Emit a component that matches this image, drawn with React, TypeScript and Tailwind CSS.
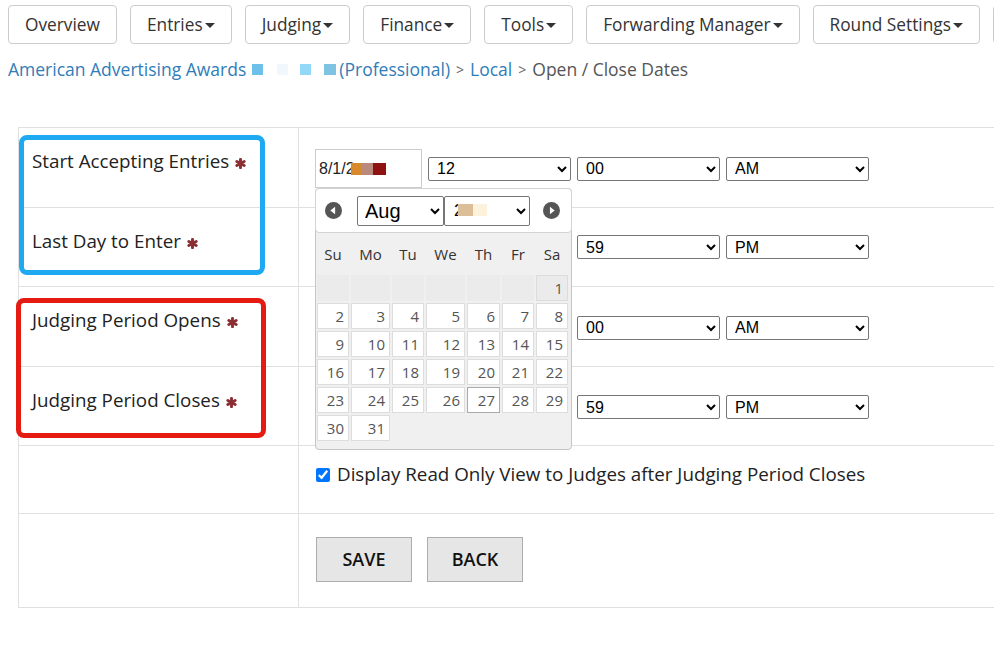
import React from "react";

const font = { fontFamily: '"Open Sans", "Liberation Sans", sans-serif' };

const navItems: { label: string; caret: boolean }[] = [
  { label: "Overview", caret: false },
  { label: "Entries", caret: true },
  { label: "Judging", caret: true },
  { label: "Finance", caret: true },
  { label: "Tools", caret: true },
  { label: "Forwarding Manager", caret: true },
  { label: "Round Settings", caret: true },
  { label: "Admin", caret: true },
];

function Caret() {
  return (
    <svg width="10" height="5" viewBox="0 0 10 5" className="ml-[2px] mt-[2px]">
      <path d="M0 0h10L5 5z" fill="#333" />
    </svg>
  );
}

function Star() {
  return (
    <svg width="11" height="11" viewBox="0 0 12 12" className="ml-[6px] inline-block align-[-1px]">
      <g stroke="#8a2f33" strokeWidth="3.2" strokeLinecap="round">
        <path d="M6 1.5v9" />
        <path d="M2 3.8l8 4.4" />
        <path d="M10 3.8l-8 4.4" />
      </g>
    </svg>
  );
}

function TimeSelect({ value, options }: { value: string; options: string[] }) {
  return (
    <select
      defaultValue={value}
      className="h-[24px] w-[143px] rounded-[2px] border border-[#767676] bg-white pl-[4px] text-[16px] text-black"
      style={{ fontFamily: '"Liberation Sans", Arial, sans-serif' }}
    >
      {options.map((o) => (
        <option key={o}>{o}</option>
      ))}
    </select>
  );
}

function DateRow({ hour, minute, ampm }: { hour: string; minute: string; ampm: string }) {
  return (
    <div className="flex items-center gap-[6px]">
      <div
        className="flex h-[39px] w-[107px] items-center border border-[#ccc] bg-white pl-[3px] text-[16px] text-[#222]"
        style={{ fontFamily: '"Liberation Sans", Arial, sans-serif' }}
      >
        <span>8/1/2</span>
        <span className="-ml-[4px] inline-block h-[12px] w-[11px] bg-[#d68a2c]" />
        <span className="inline-block h-[12px] w-[11px] bg-[#b98a7c]" />
        <span className="inline-block h-[12px] w-[13px] bg-[#8e1212]" />
      </div>
      <TimeSelect value={hour} options={["12", "11", "10"]} />
      <TimeSelect value={minute} options={["00", "59"]} />
      <TimeSelect value={ampm} options={["AM", "PM"]} />
    </div>
  );
}

function CircleArrow({ dir }: { dir: "prev" | "next" }) {
  return (
    <svg width="17" height="17" viewBox="0 0 16 16">
      <circle cx="8" cy="8" r="8" fill="#555" />
      {dir === "prev" ? <path d="M9.5 4.5v7L5 8z" fill="#fff" /> : <path d="M6.5 4.5v7L11 8z" fill="#fff" />}
    </svg>
  );
}

const cols = "grid grid-cols-[32px_39px_32px_39px_33px_32px_32px] gap-x-[2px]";

function Calendar() {
  const days: (number | null)[] = [null, null, null, null, null, null, 1];
  for (let d = 2; d <= 31; d++) days.push(d);
  return (
    <div
      className="absolute left-0 top-[39px] z-10 w-[257px] rounded-[4px] border border-[#c5c5c5] bg-[#f0f0f0] pb-[8px]"
      style={font}
    >
      <div className="-m-px flex h-[45px] items-center rounded-[4px] border border-[#d3d3d3] bg-white px-[9px]">
        <CircleArrow dir="prev" />
        <select
          defaultValue="Aug"
          className="ml-[15px] h-[30px] w-[87px] rounded-[2px] border border-[#767676] bg-white pl-[3px] text-[20px] text-black"
          style={{ fontFamily: '"Liberation Sans", Arial, sans-serif' }}
        >
          <option>Jul</option>
          <option>Aug</option>
          <option>Sep</option>
        </select>
        <div className="relative">
          <select
            className="h-[30px] w-[86px] rounded-[2px] border border-[#767676] bg-white pl-[5px] text-[17px] text-black"
            style={{ fontFamily: '"Liberation Sans", Arial, sans-serif' }}
          >
            <option>2</option>
          </select>
          <span className="pointer-events-none absolute left-[14px] top-[9px] h-[12px] w-[15px] bg-[#dcbf98]" />
          <span className="pointer-events-none absolute left-[29px] top-[9px] h-[12px] w-[14px] bg-[#fdf2dc]" />
        </div>
        <div className="ml-auto mr-[2px]">
          <CircleArrow dir="next" />
        </div>
      </div>
      <div className={`${cols} h-[43px] items-center px-[1px] pt-[2px] text-[15px] text-[#333]`}>
        {["Su", "Mo", "Tu", "We", "Th", "Fr", "Sa"].map((d) => (
          <div key={d} className="text-center">
            {d}
          </div>
        ))}
      </div>
      <div className={`${cols} gap-y-[2px] px-[1px]`}>
        {days.map((d, i) =>
          d === null ? (
            <div key={i} className="h-[26px] bg-[#ebebeb]" />
          ) : (
            <div
              key={i}
              className={`flex h-[26px] items-center justify-end border pr-[4px] text-[15px] text-[#555] ${
                d === 1 ? "border-[#dcdcdc] bg-[#ebebeb]" : d === 27 ? "border-[#aaa] bg-white" : "border-[#ddd] bg-white"
              }`}
            >
              {d}
            </div>
          )
        )}
      </div>
    </div>
  );
}

export default function App() {
  return (
    <div className="relative h-[653px] w-[994px] overflow-hidden bg-white text-[18.8px] text-[#222]" style={font}>
      <nav className="flex gap-[13px] whitespace-nowrap pl-[8px] pt-[5px]">
        {navItems.map((n) => (
          <button
            key={n.label}
            className="flex h-[39px] shrink-0 items-center rounded-[4px] border border-[#ccc] bg-white px-[16px] text-[17.3px] text-[#333]"
          >
            {n.label}
            {n.caret && <Caret />}
          </button>
        ))}
      </nav>

      <div className="mt-[12px] flex items-center pl-[8px] text-[17.5px] leading-[27px]">
        <span className="text-[#2f7db8]">American Advertising Awards</span>
        <span className="ml-[6px] inline-block h-[11px] w-[11px] bg-[#6cc0ea]" />
        <span className="ml-[14px] inline-block h-[11px] w-[11px] bg-[#f0f8fd]" />
        <span className="ml-[12px] inline-block h-[11px] w-[11px] bg-[#94d8f7]" />
        <span className="ml-[13px] inline-block h-[11px] w-[12px] bg-[#7fc3e2]" />
        <span className="ml-[3px] text-[#2f7db8]">(Professional)</span>
        <span className="mx-[6px] text-[14px] text-[#666]">&gt;</span>
        <span className="text-[#2f7db8]">Local</span>
        <span className="mx-[6px] text-[14px] text-[#666]">&gt;</span>
        <span className="text-[#555]">Open / Close Dates</span>
      </div>

      <div className="ml-[18px] mt-[44px] w-[1000px] border-b border-l border-[#e0e0e0]">
        <div className="grid h-[80px] grid-cols-[280px_1fr] border-t border-[#e0e0e0]">
          <div className="border-r border-[#e0e0e0] pl-[13px] pt-[20px] leading-[27px]">
            Start Accepting Entries
            <Star />
          </div>
          <div className="flex items-center pl-[16px] pt-[2px]">
            <div className="relative">
              <DateRow hour="12" minute="00" ampm="AM" />
              <Calendar />
            </div>
          </div>
        </div>
        <div className="grid h-[79px] grid-cols-[280px_1fr] border-t border-[#e0e0e0]">
          <div className="border-r border-[#e0e0e0] pl-[13px] pt-[20px] leading-[27px]">
            Last Day to Enter
            <Star />
          </div>
          <div className="flex items-center pl-[16px]">
            <DateRow hour="11" minute="59" ampm="PM" />
          </div>
        </div>
        <div className="grid h-[80px] grid-cols-[280px_1fr] border-t border-[#e0e0e0]">
          <div className="border-r border-[#e0e0e0] pl-[13px] pt-[20px] leading-[27px]">
            Judging Period Opens
            <Star />
          </div>
          <div className="flex items-center pl-[16px] pt-[2px]">
            <DateRow hour="12" minute="00" ampm="AM" />
          </div>
        </div>
        <div className="grid h-[79px] grid-cols-[280px_1fr] border-t border-[#e0e0e0]">
          <div className="border-r border-[#e0e0e0] pl-[13px] pt-[20px] leading-[27px]">
            Judging Period Closes
            <Star />
          </div>
          <div className="flex items-center pl-[16px] pt-[2px]">
            <DateRow hour="11" minute="59" ampm="PM" />
          </div>
        </div>
        <div className="grid h-[68px] grid-cols-[280px_1fr] border-t border-[#e0e0e0]">
          <div className="border-r border-[#e0e0e0]" />
          <label className="flex items-start gap-[7px] pl-[17px] pt-[15px] leading-[27px]">
            <input type="checkbox" defaultChecked className="mt-[7px] h-[14px] w-[14px] accent-[#0075ff]" />
            Display Read Only View to Judges after Judging Period Closes
          </label>
        </div>
        <div className="grid h-[94px] grid-cols-[280px_1fr] border-t border-[#e0e0e0]">
          <div className="border-r border-[#e0e0e0]" />
          <div className="flex items-start gap-[15px] pl-[17px] pt-[23px]">
            <button className="h-[45px] w-[96px] border border-[#adadad] bg-[#e6e6e6] text-[18px] font-semibold text-[#111]">
              SAVE
            </button>
            <button className="h-[45px] w-[96px] border border-[#adadad] bg-[#e6e6e6] text-[18px] font-semibold text-[#111]">
              BACK
            </button>
          </div>
        </div>
      </div>

      <div className="pointer-events-none absolute left-[19px] top-[135px] h-[140px] w-[246px] rounded-[8px] border-[5px] border-[#1fa9f1]" />
      <div className="pointer-events-none absolute left-[16px] top-[298px] h-[140px] w-[250px] rounded-[8px] border-[5px] border-[#e51a10]" />
    </div>
  );
}
